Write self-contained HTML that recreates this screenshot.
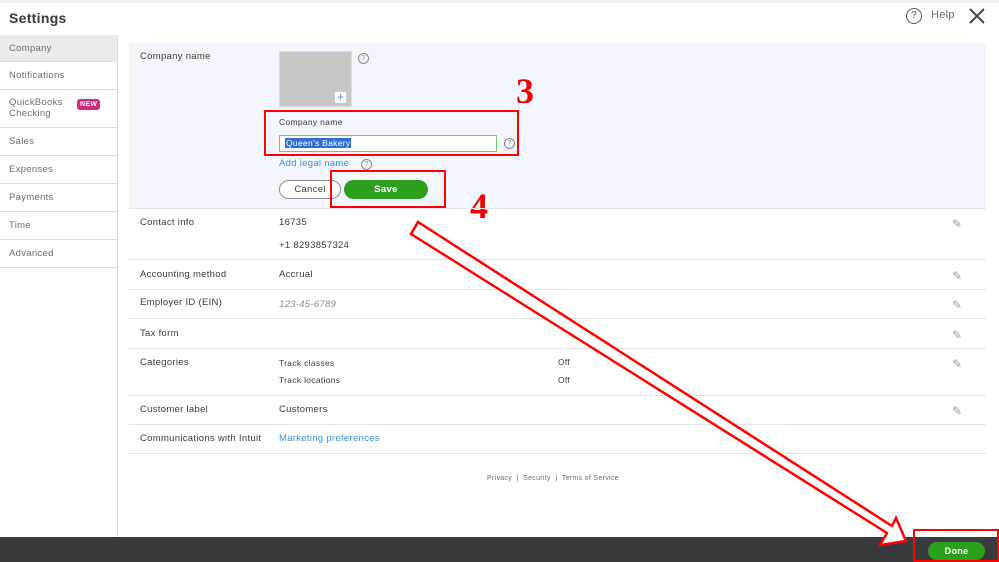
<!DOCTYPE html>
<html><head><style>
body{margin:0;width:999px;height:562px;overflow:hidden;background:#fff;font-family:"Liberation Sans",sans-serif;position:relative;letter-spacing:0.3px}
.a{position:absolute}
.nav{left:0;width:117px;border-right:1px solid #ddd;font-size:9.5px;color:#6b6c72}
.nav div{border-bottom:1px solid #ddd;padding-left:9px;box-sizing:border-box}
.lbl{font-size:9.5px;color:#393a3d}
.val{font-size:9.5px;color:#393a3d}
.hr{height:1px;background:#e3e4e6;left:129px;width:857px}
.pen{font-size:12px;color:#9a9ca2;left:952px}
</style></head><body>
<div class="a" style="left:0;top:0;width:999px;height:3px;background:#f0f0f0"></div>
<div class="a" style="left:9px;top:10px;font-size:14px;font-weight:bold;color:#393a3d">Settings</div>
<div class="a" style="left:906px;top:8px;width:16px;height:16px;border:1.5px solid #555;border-radius:50%;box-sizing:border-box;font-size:10px;text-align:center;line-height:13px;color:#555">?</div>
<div class="a" style="left:931px;top:9px;font-size:11px;color:#6b6c72">Help</div>
<svg class="a" style="left:968px;top:8px" width="18" height="16"><path d="M2 1L16 15M16 1L2 15" stroke="#444" stroke-width="2"/></svg>
<div class="a nav" style="top:35px;height:502px">
<div style="height:27px;line-height:27px;background:#ececec">Company</div>
<div style="height:28px;line-height:28px">Notifications</div>
<div style="height:38px;padding-top:7px;line-height:11px;position:relative">QuickBooks<br>Checking<span style="position:absolute;left:77px;top:9px;background:#d4287a;color:#fff;font-size:7px;font-weight:bold;padding:0 3px;border-radius:3px">NEW</span></div>
<div style="height:28px;line-height:28px">Sales</div>
<div style="height:28px;line-height:28px">Expenses</div>
<div style="height:28px;line-height:28px">Payments</div>
<div style="height:28px;line-height:28px">Time</div>
<div style="height:28px;line-height:28px">Advanced</div>
</div>
<div class="a" style="left:129px;top:43px;width:857px;height:165px;background:#f3f7fd"></div>
<div class="a lbl" style="left:140px;top:51px">Company name</div>
<div class="a" style="left:279px;top:51px;width:71px;height:54px;background:#c7c7c7;border:1px solid #ddd"></div>
<div class="a" style="left:335px;top:92px;width:11px;height:11px;background:#fff;color:#4a90d9;font-size:12px;line-height:11px;text-align:center">+</div>
<div class="a" style="left:358px;top:53px;width:9px;height:9px;border:1px solid #888;border-radius:50%;font-size:7px;text-align:center;line-height:9px;color:#888">?</div>
<div class="a lbl" style="left:279px;top:117px;font-size:8.5px">Company name</div>
<div class="a" style="left:279px;top:135px;width:218px;height:17px;border:1px solid #7cc36a;background:#fff;box-sizing:border-box"></div>
<div class="a" style="left:285px;top:138px;background:#2f6fd0;color:#fff;font-size:8.5px;padding:0 1px">Queen's Bakery</div>
<div class="a" style="left:504px;top:138px;width:9px;height:9px;border:1px solid #888;border-radius:50%;font-size:7px;text-align:center;line-height:9px;color:#888">?</div>
<div class="a" style="left:279px;top:158px;font-size:9.5px;color:#3a8fd6">Add legal name</div>
<div class="a" style="left:361px;top:159px;width:9px;height:9px;border:1px solid #888;border-radius:50%;font-size:7px;text-align:center;line-height:9px;color:#888">?</div>
<div class="a" style="left:279px;top:180px;width:62px;height:19px;border:1px solid #8d9096;border-radius:10px;box-sizing:border-box;text-align:center;line-height:17px;font-size:9.5px;color:#393a3d;background:#fff">Cancel</div>
<div class="a" style="left:344px;top:180px;width:84px;height:19px;border-radius:10px;background:#2ca01c;text-align:center;line-height:19px;font-size:9.5px;font-weight:bold;color:#fff">Save</div>
<div class="a" style="left:264px;top:110px;width:255px;height:46px;border:2.5px solid #f00;box-sizing:border-box"></div>
<div class="a" style="left:330px;top:170px;width:116px;height:38px;border:2.5px solid #f00;box-sizing:border-box"></div>
<div class="a" style="left:516px;top:70px;font-family:'Liberation Serif',serif;font-size:36px;font-weight:bold;color:#e00">3</div>
<div class="a" style="left:470px;top:185px;font-family:'Liberation Serif',serif;font-size:36px;font-weight:bold;color:#e00">4</div>
<div class="a hr" style="top:208px"></div>
<div class="a lbl" style="left:140px;top:217px">Contact info</div>
<div class="a val" style="left:279px;top:217px">16735</div>
<div class="a val" style="left:279px;top:240px">+1 8293857324</div>
<div class="a pen" style="top:217px">✎</div>
<div class="a hr" style="top:259px"></div>
<div class="a lbl" style="left:140px;top:269px">Accounting method</div>
<div class="a val" style="left:279px;top:269px">Accrual</div>
<div class="a pen" style="top:269px">✎</div>
<div class="a hr" style="top:289px"></div>
<div class="a lbl" style="left:140px;top:297px">Employer ID (EIN)</div>
<div class="a val" style="left:279px;top:299px;color:#8d9096;font-style:italic">123-45-6789</div>
<div class="a pen" style="top:298px">✎</div>
<div class="a hr" style="top:318px"></div>
<div class="a lbl" style="left:140px;top:328px">Tax form</div>
<div class="a pen" style="top:328px">✎</div>
<div class="a hr" style="top:348px"></div>
<div class="a lbl" style="left:140px;top:357px">Categories</div>
<div class="a val" style="left:279px;top:358px;font-size:8.5px">Track classes</div>
<div class="a val" style="left:279px;top:375px;font-size:8.5px">Track locations</div>
<div class="a val" style="left:558px;top:357px;font-size:8.5px">Off</div>
<div class="a val" style="left:558px;top:375px;font-size:8.5px">Off</div>
<div class="a pen" style="top:357px">✎</div>
<div class="a hr" style="top:395px"></div>
<div class="a lbl" style="left:140px;top:404px">Customer label</div>
<div class="a val" style="left:279px;top:404px">Customers</div>
<div class="a pen" style="top:404px">✎</div>
<div class="a hr" style="top:424px"></div>
<div class="a lbl" style="left:140px;top:433px">Communications with Intuit</div>
<div class="a" style="left:279px;top:433px;font-size:9.5px;color:#3a8fd6">Marketing preferences</div>
<div class="a hr" style="top:453px"></div>
<div class="a" style="left:487px;top:475px;font-size:7px;color:#6b6c72">Privacy &nbsp;| &nbsp;Security &nbsp;| &nbsp;Terms of Service</div>
<div class="a" style="left:0;top:537px;width:999px;height:25px;background:#393a3d"></div>
<div class="a" style="left:928px;top:542px;width:57px;height:18px;border-radius:9px;background:#2ca01c;color:#fff;font-size:9px;font-weight:bold;text-align:center;line-height:18px">Done</div>
<div class="a" style="left:913px;top:529px;width:86px;height:33px;border:2.5px solid #f00;box-sizing:border-box"></div>
<svg class="a" style="left:0;top:0" width="999" height="562">
<polygon points="418,222 892,526 896,518 906,541 880,545 887,533 411,234" fill="#fff" stroke="#f00" stroke-width="2.5" stroke-linejoin="miter"/>
</svg>
</body></html>
